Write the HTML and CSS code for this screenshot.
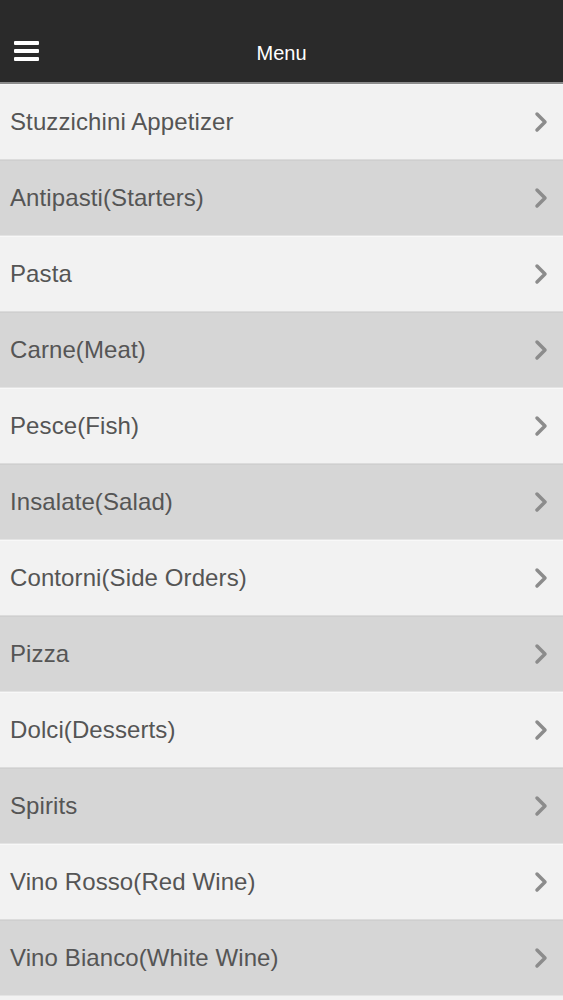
FILE: index.html
```html
<!DOCTYPE html>
<html>
<head>
<meta charset="utf-8">
<link rel="stylesheet" href="styles.css">
</head>
<body>
<header class="topbar">
  <div class="burger"><span></span><span></span><span></span></div>
  <div class="title">Menu</div>
</header>
<ul class="menu">
  <li class="row"><span class="label">Stuzzichini Appetizer</span><svg class="chev" viewBox="0 0 14 22"><path d="M3 3 L11 11 L3 19" /></svg></li>
  <li class="row alt"><span class="label">Antipasti(Starters)</span><svg class="chev" viewBox="0 0 14 22"><path d="M3 3 L11 11 L3 19" /></svg></li>
  <li class="row"><span class="label">Pasta</span><svg class="chev" viewBox="0 0 14 22"><path d="M3 3 L11 11 L3 19" /></svg></li>
  <li class="row alt"><span class="label">Carne(Meat)</span><svg class="chev" viewBox="0 0 14 22"><path d="M3 3 L11 11 L3 19" /></svg></li>
  <li class="row"><span class="label">Pesce(Fish)</span><svg class="chev" viewBox="0 0 14 22"><path d="M3 3 L11 11 L3 19" /></svg></li>
  <li class="row alt"><span class="label">Insalate(Salad)</span><svg class="chev" viewBox="0 0 14 22"><path d="M3 3 L11 11 L3 19" /></svg></li>
  <li class="row"><span class="label">Contorni(Side Orders)</span><svg class="chev" viewBox="0 0 14 22"><path d="M3 3 L11 11 L3 19" /></svg></li>
  <li class="row alt"><span class="label">Pizza</span><svg class="chev" viewBox="0 0 14 22"><path d="M3 3 L11 11 L3 19" /></svg></li>
  <li class="row"><span class="label">Dolci(Desserts)</span><svg class="chev" viewBox="0 0 14 22"><path d="M3 3 L11 11 L3 19" /></svg></li>
  <li class="row alt"><span class="label">Spirits</span><svg class="chev" viewBox="0 0 14 22"><path d="M3 3 L11 11 L3 19" /></svg></li>
  <li class="row"><span class="label">Vino Rosso(Red Wine)</span><svg class="chev" viewBox="0 0 14 22"><path d="M3 3 L11 11 L3 19" /></svg></li>
  <li class="row alt"><span class="label">Vino Bianco(White Wine)</span><svg class="chev" viewBox="0 0 14 22"><path d="M3 3 L11 11 L3 19" /></svg></li>
</ul>
</body>
</html>
```

FILE: styles.css
```css
html, body {
  margin: 0;
  padding: 0;
  background: #f2f2f2;
  font-family: "Liberation Sans", Arial, sans-serif;
}
.topbar {
  position: relative;
  height: 82px;
  background: #2a2a2a;
  border-bottom: 2px solid #8c8c8c;
  display: flex;
  align-items: center;
  justify-content: center;
}
.burger {
  position: absolute;
  left: 14px;
  top: 41px;
  width: 25px;
  display: flex;
  flex-direction: column;
  gap: 4px;
}
.burger span {
  display: block;
  height: 4px;
  background: #ffffff;
  border-radius: 1px;
}
.title {
  color: #ffffff;
  font-size: 20px;
  margin-top: 24px;
}
.menu {
  list-style: none;
  margin: 0;
  padding: 0;
}
.row {
  height: 74px;
  box-sizing: content-box;
  display: flex;
  align-items: center;
  justify-content: space-between;
  padding: 0 15px 0 10px;
  background: #f2f2f2;
  border-top: 1px solid #f8f8f8;
  border-bottom: 1px solid #dcdcdc;
}
.row.alt {
  background: #d6d6d6;
  border-top: 1px solid #cfcfcf;
  border-bottom: 1px solid #e4e4e4;
}
.label {
  color: #555555;
  font-size: 24px;
  letter-spacing: 0.1px;
}
.chev {
  width: 14px;
  height: 22px;
  fill: none;
  stroke: #8c8c8c;
  stroke-width: 3.5;
  stroke-linecap: round;
  stroke-linejoin: round;
}
```
